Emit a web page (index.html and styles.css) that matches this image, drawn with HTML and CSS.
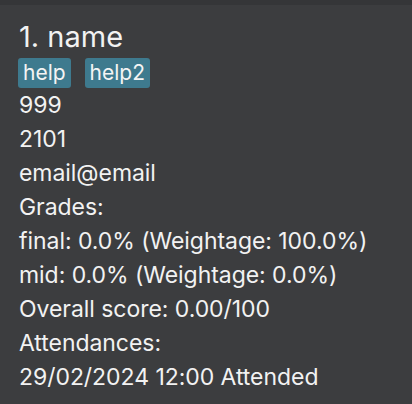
FILE: index.html
```html
<!DOCTYPE html>
<html>
<head>
<meta charset="utf-8">
<link rel="stylesheet" href="styles.css">
</head>
<body>
<div class="topbar"></div>
<div class="card">
  <div class="title">1. name</div>
  <div class="tags">
    <span class="tag">help</span>
    <span class="tag">help2</span>
  </div>
  <div class="line">999</div>
  <div class="line">2101</div>
  <div class="line">email@email</div>
  <div class="line">Grades:</div>
  <div class="line">final: 0.0% (Weightage: 100.0%)</div>
  <div class="line">mid: 0.0% (Weightage: 0.0%)</div>
  <div class="line">Overall score: 0.00/100</div>
  <div class="line">Attendances:</div>
  <div class="line">29/02/2024 12:00 Attended</div>
</div>
</body>
</html>
```
FILE: styles.css
```css
html, body {
  margin: 0;
  padding: 0;
  background: #3c3d3f;
  width: 412px;
  height: 404px;
  overflow: hidden;
  font-family: Inter, "Liberation Sans", sans-serif;
  color: #f2f2f2;
}
.topbar {
  height: 5px;
  background: #353638;
}
.card {
  padding: 14px 18px 0 19px;
  display: flex;
  flex-direction: column;
}
.title {
  font-size: 29px;
  line-height: 36px;
}
.tags {
  display: flex;
  gap: 14px;
  margin-top: 3px;
  margin-left: -1px;
}
.tag {
  background: #3e7a8e;
  color: #f4f4f4;
  font-size: 21px;
  line-height: 30px;
  padding: 0 5px;
  border-radius: 3px;
}
.line {
  font-size: 23px;
  line-height: 34px;
  letter-spacing: -0.05px;
}
```
